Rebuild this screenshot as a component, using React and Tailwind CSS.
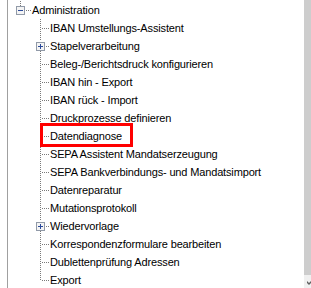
const items = [
  { label: 'IBAN Umstellungs-Assistent' },
  { label: 'Stapelverarbeitung', toggle: 'plus' },
  { label: 'Beleg-/Berichtsdruck konfigurieren' },
  { label: 'IBAN hin - Export' },
  { label: 'IBAN rück - Import' },
  { label: 'Druckprozesse definieren' },
  { label: 'Datendiagnose', marked: true },
  { label: 'SEPA Assistent Mandatserzeugung' },
  { label: 'SEPA Bankverbindungs- und Mandatsimport' },
  { label: 'Datenreparatur' },
  { label: 'Mutationsprotokoll' },
  { label: 'Wiedervorlage', toggle: 'plus' },
  { label: 'Korrespondenzformulare bearbeiten' },
  { label: 'Dublettenprüfung Adressen' },
  { label: 'Export' },
];

const dots = (x1, x2, y) => {
  const out = [];
  for (let x = x1; x <= x2; x += 2) out.push(<rect key={`h${x}`} x={x} y={y} width="1" height="1" />);
  return out;
};

const vdots = (x, y1, y2) => {
  const out = [];
  for (let y = y1; y <= y2; y += 2) out.push(<rect key={`v${y}`} x={x} y={y} width="1" height="1" />);
  return out;
};

const ToggleBox = ({ x, y, type }) => (
  <g>
    <rect x={x + 0.5} y={y + 0.5} width="8" height="8" fill="#f4f4f4" stroke="#919aa8" />
    <rect x={x + 2} y={y + 4} width="5" height="1" fill="#2a4a9a" />
    {type === 'plus' && <rect x={x + 4} y={y + 2} width="1" height="5" fill="#2a4a9a" />}
  </g>
);

const ChildConnector = ({ toggle, last }) => (
  <svg width="14" height="18" className="shrink-0">
    <g fill="#7a7a7a">
      {toggle ? (
        <>
          {vdots(4, 0, 3)}
          {!last && vdots(4, 14, 17)}
          {dots(10, 13, 9)}
        </>
      ) : (
        <>
          {vdots(4, 0, last ? 9 : 17)}
          {dots(6, 13, 9)}
        </>
      )}
    </g>
    {toggle && <ToggleBox x={0} y={5} type={toggle} />}
  </svg>
);

const RootConnector = () => (
  <svg width="24" height="18" className="shrink-0">
    <g fill="#7a7a7a">
      {vdots(12, 0, 4)}
      {dots(18, 23, 9)}
    </g>
    <ToggleBox x={8} y={5} type="minus" />
  </svg>
);

export default function App() {
  return (
    <div
      className="w-[311px] h-[288px] bg-white overflow-hidden flex text-[11px] text-black"
      style={{ fontFamily: '"Liberation Sans", Arial, sans-serif' }}
    >
      <div className="w-[7px] shrink-0" />
      <div className="w-px shrink-0 bg-[#a0a0a0]" />

      <div className="flex-1 flex flex-col pt-[1px]">
        <div className="flex items-center h-[18px]">
          <RootConnector />
          <span className="leading-[18px] tracking-[-0.15px] whitespace-nowrap">Administration</span>
        </div>
        {items.map((item, i) => (
          <div key={item.label} className="flex items-center h-[18px]">
            <div className="w-[28px] shrink-0" />
            <ChildConnector toggle={item.toggle} last={i === items.length - 1} />
            <span className="relative leading-[18px] tracking-[-0.15px] whitespace-nowrap">
              {item.label}
              {item.marked && (
                <span className="absolute left-[-10px] top-[-4px] w-[93px] h-[24px] border-[3px] border-[#ff0000]" />
              )}
            </span>
          </div>
        ))}
      </div>

      <div className="w-[7px] shrink-0 flex flex-col">
        <div className="flex-1 bg-[#cdcdcd]" />
        <div className="h-[13px] bg-[#f0f0f0] flex items-center justify-end">
          <svg width="7" height="13">
            <path d="M3 6 L5 8 L7 6 L7 8 L5 10 L3 8 Z" fill="#606060" />
          </svg>
        </div>
      </div>
    </div>
  );
}
